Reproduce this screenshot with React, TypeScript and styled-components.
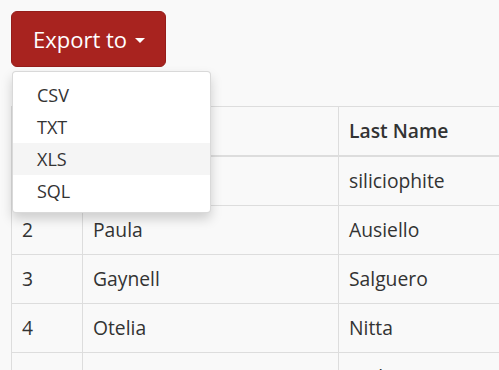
import React from "react";
import styled, { createGlobalStyle } from "styled-components";

const Global = createGlobalStyle`
  html, body {
    margin: 0;
    padding: 0;
    background: #f9f9f9;
    overflow: hidden;
  }
  body {
    font-family: "Open Sans", "Noto Sans", sans-serif;
    color: #333;
  }
`;

const Page = styled.div`
  padding: 11px;
  width: 700px;
`;

const ButtonGroup = styled.div`
  position: relative;
  display: inline-block;
`;

const ExportButton = styled.button`
  display: inline-flex;
  align-items: center;
  gap: 8px;
  box-sizing: border-box;
  height: 56px;
  padding: 0 20px 0 21px;
  background: #a8231f;
  border: 1px solid #951d1a;
  border-radius: 6px;
  color: #fff;
  font-family: "Open Sans", sans-serif;
  font-size: 22px;
  line-height: 32px;
  cursor: pointer;
`;

const Caret = styled.span`
  display: inline-block;
  width: 0;
  height: 0;
  margin-top: 3px;
  border-top: 5px solid #fff;
  border-left: 5px solid transparent;
  border-right: 5px solid transparent;
`;

const Menu = styled.ul`
  position: absolute;
  top: 60px;
  left: 1px;
  z-index: 10;
  box-sizing: border-box;
  width: 199px;
  margin: 0;
  padding: 7px 0 5px;
  list-style: none;
  background: #fff;
  border: 1px solid rgba(0, 0, 0, 0.15);
  border-radius: 4px;
  box-shadow: 0 6px 12px rgba(0, 0, 0, 0.175);
`;

const MenuItem = styled.li<{ $active?: boolean }>`
  height: 32px;
  line-height: 32px;
  padding: 0 20px 0 24px;
  font-size: 18px;
  color: #333;
  background: ${(p) => (p.$active ? "#f5f5f5" : "transparent")};
`;

const Table = styled.table`
  margin-top: 39px;
  border-collapse: collapse;
  width: 620px;
  table-layout: fixed;
  font-size: 19.3px;
  color: #333;
  border: 1px solid #ddd;
`;

const Th = styled.th<{ $w?: number }>`
  width: ${(p) => (p.$w ? `${p.$w}px` : "auto")};
  text-align: left;
  font-weight: 600;
  padding: 12px 10px;
  line-height: 24px;
  border: 1px solid #ddd;
  border-bottom: 2px solid #ddd;
  white-space: nowrap;
`;

const Td = styled.td`
  padding: 12px 10px;
  line-height: 24px;
  border: 1px solid #ddd;
  white-space: nowrap;
`;

const rows = [
  ["1", "Ruthann", "siliciophite"],
  ["2", "Paula", "Ausiello"],
  ["3", "Gaynell", "Salguero"],
  ["4", "Otelia", "Nitta"],
  ["5", "Sana", "Sarkis"],
];

export default function App() {
  return (
    <Page>
      <Global />
      <ButtonGroup>
        <ExportButton type="button">
          Export to <Caret />
        </ExportButton>
        <Menu>
          <MenuItem>CSV</MenuItem>
          <MenuItem>TXT</MenuItem>
          <MenuItem $active>XLS</MenuItem>
          <MenuItem>SQL</MenuItem>
        </Menu>
      </ButtonGroup>
      <Table>
        <thead>
          <tr>
            <Th $w={50}>#</Th>
            <Th $w={235}>First Name</Th>
            <Th>Last Name</Th>
          </tr>
        </thead>
        <tbody>
          {rows.map((r) => (
            <tr key={r[0]}>
              <Td>{r[0]}</Td>
              <Td>{r[1]}</Td>
              <Td>{r[2]}</Td>
            </tr>
          ))}
        </tbody>
      </Table>
    </Page>
  );
}
